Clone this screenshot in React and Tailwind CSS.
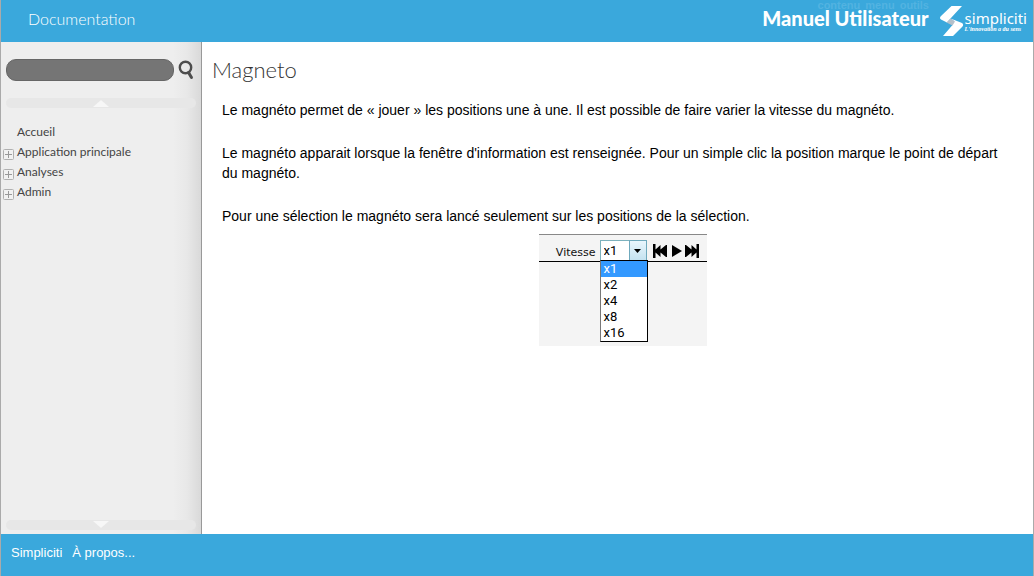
import { useState } from "react";

const speeds = ["x1", "x2", "x4", "x8", "x16"];

const entries = [
  { label: "Accueil", expandable: false },
  { label: "Application principale", expandable: true },
  { label: "Analyses", expandable: true },
  { label: "Admin", expandable: true },
];

function Logo() {
  return (
    <a href="#simpliciti" className="flex items-start pt-[6px] text-white">
      <svg width="24" height="30" viewBox="0 0 24 30" aria-hidden="true">
        <path d="M11.500 0H22L10.500 12.500L7 16.500L1 13.500Q-1 12 1 10Z" fill="#fff" />
        <path d="M10.500 12.500L22 17Q24 18.500 22.500 20.500L13 30H3L12.500 19L14 15Z" fill="#fff" />
        <path d="M10.500 12.500L15 15.500L12.500 19.500L6.500 16.500Z" fill="#b4c0ca" />
      </svg>
      <span className="flex flex-col pl-[1px] pt-[4px]">
        <span className="font-['Noto_Sans',sans-serif] text-[15px] leading-[16px]">simpliciti</span>
        <span className="whitespace-nowrap font-['Liberation_Serif',serif] text-[6px] font-bold italic leading-[6px]">
          L'innovation a du sens
        </span>
      </span>
    </a>
  );
}

function Header() {
  return (
    <header className="relative flex h-[42px] items-start justify-between bg-[#3aa8dc] pl-[27px] pr-[6px] text-white">
      <nav
        aria-label="Raccourcis"
        className="absolute right-[104px] top-0 flex gap-[5px] text-[11px] font-bold leading-[11px] text-[#52b3e1]"
      >
        <a href="#contenu">contenu</a>
        <a href="#menu">menu</a>
        <a href="#outils">outils</a>
      </nav>
      <a href="#documentation" className="pt-[9px] font-['Lato',sans-serif] text-[16px] font-light leading-[20px]">
        Documentation
      </a>
      <div className="relative flex items-start gap-[11px]">
        <span className="pt-[10px] font-['Lato',sans-serif] text-[20px] font-black leading-[16px]">
          Manuel Utilisateur
        </span>
        <Logo />
      </div>
    </header>
  );
}

function ScrollBar({ up }) {
  return (
    <button
      type="button"
      aria-label={up ? "Défiler vers le haut" : "Défiler vers le bas"}
      className="flex h-[10px] items-center justify-center rounded-full bg-[#e7e7e7]"
    >
      <svg width="16" height="8" viewBox="0 0 16 8" fill="#f7f7f7" aria-hidden="true">
        {up ? <path d="M0 8L8 1L16 8Z" /> : <path d="M0 0L8 7L16 0Z" />}
      </svg>
    </button>
  );
}

function Sidebar() {
  return (
    <aside className="flex w-[201px] shrink-0 flex-col border-r border-[#999] bg-[linear-gradient(to_right,#eee_0,#eee_172px,#e8e8e8_186px,#d9d9d9_200px)] pb-[4px] pl-[5px] pr-[5px] pt-[17px]">
      <form className="flex items-start gap-[4px]" onSubmit={(e) => e.preventDefault()}>
        <input
          type="search"
          aria-label="Rechercher"
          className="h-[22px] w-[168px] rounded-[10px] border border-[#666] bg-[#757575] px-2 text-[12px] text-white outline-none"
        />
        <button type="submit" aria-label="Lancer la recherche" className="h-[22px] w-[16px]">
          <svg width="16" height="20" viewBox="0 0 16 20" fill="none" stroke="#4d4d4d" aria-hidden="true">
            <circle cx="7.500" cy="7.500" r="5.700" strokeWidth="2.400" />
            <path d="M10.500 12.500L13.500 17.500" strokeWidth="3" strokeLinecap="round" />
          </svg>
        </button>
      </form>
      <div className="mt-[17px] flex flex-col">
        <ScrollBar up />
      </div>
      <ul className="-ml-[3px] mt-[14px] grow font-['Lato',sans-serif] text-[12px] leading-[20px] text-[#444]">
        {entries.map((entry) => (
          <li key={entry.label} className="flex items-center">
            <span className="flex w-[14px] shrink-0 pt-[4px]">
              {entry.expandable && (
                <button type="button" aria-label={`Développer ${entry.label}`}>
                  <svg width="11" height="11" viewBox="0 0 11 11" fill="none" aria-hidden="true">
                    <rect x=".5" y=".5" width="10" height="10" rx="1" stroke="#b0b0b0" fill="#f2f2f2" />
                    <path d="M2 5.500H9M5.500 2V9" stroke="#999" />
                  </svg>
                </button>
              )}
            </span>
            <a href={`#${entry.label}`}>{entry.label}</a>
          </li>
        ))}
      </ul>
      <ScrollBar />
    </aside>
  );
}

function Player() {
  const [speed, setSpeed] = useState("x1");
  return (
    <div className="h-[112px] w-[168px] border-t border-[#888] bg-[#f4f4f4]">
      <div className="flex h-[27px] items-center justify-end border-b border-black pr-[8px] pt-[5px]">
        <label htmlFor="speed" className="pr-[4px] pt-[5px] font-['DejaVu_Sans',sans-serif] text-[11px] leading-[14px] text-[#111]">
          Vitesse
        </label>
        <div className="relative flex">
          <select
            id="speed"
            value={speed}
            onChange={(e) => setSpeed(e.target.value)}
            className="h-[21px] w-[47px] appearance-none border border-[#7db1bd] bg-white pl-[3px] font-['Roboto',sans-serif] text-[13px] leading-[18px] text-black outline-none"
          >
            {speeds.map((s) => (
              <option key={s}>{s}</option>
            ))}
          </select>
          <span className="pointer-events-none absolute inset-y-0 right-0 flex w-[18px] items-center justify-center border border-[#6fa9bd] bg-[linear-gradient(#e9f6fd,#c4e2f0)]">
            <svg width="7" height="4" viewBox="0 0 7 4" aria-hidden="true">
              <path d="M0 0H7L3.500 4Z" />
            </svg>
          </span>
          <ul
            role="listbox"
            aria-label="Vitesse"
            className="absolute left-0 top-[20px] w-[48px] border border-black border-l-[#777] bg-white font-['Roboto',sans-serif] text-[13px] leading-[16px] text-black"
          >
            {speeds.map((s) => (
              <li
                key={s}
                role="option"
                aria-selected={s === speed}
                onClick={() => setSpeed(s)}
                className={s === speed ? "bg-[#3399ff] pl-[3px] text-white" : "pl-[3px]"}
              >
                {s}
              </li>
            ))}
          </ul>
        </div>
        <div className="flex gap-[5px] pl-[6px]">
          <button type="button" aria-label="Précédent">
            <svg width="14" height="14" viewBox="0 0 14 14" aria-hidden="true">
              <path d="M0 0H2.500V5.500L7.500 1V5.500L13 1H14V13H13L7.500 8.500V13L2.500 8.500V14H0Z" />
            </svg>
          </button>
          <button type="button" aria-label="Lecture">
            <svg width="10" height="14" viewBox="0 0 10 14" aria-hidden="true">
              <path d="M0 1L10 7L0 13Z" />
            </svg>
          </button>
          <button type="button" aria-label="Suivant" className="-ml-[2px]">
            <svg width="14" height="14" viewBox="0 0 14 14" aria-hidden="true">
              <path d="M14 0H11.500V5.500L6.500 1V5.500L1 1H0V13H1L6.500 8.500V13L11.500 8.500V14H14Z" />
            </svg>
          </button>
        </div>
      </div>
    </div>
  );
}

export default function App() {
  return (
    <div className="flex min-h-screen flex-col border-x border-[#aaa] bg-white font-['Liberation_Sans',Arial,sans-serif]">
      <Header />
      <div className="flex grow">
        <Sidebar />
        <main className="grow px-[10px] pt-[16px]">
          <h1 className="font-['Lato',sans-serif] text-[22px] font-light leading-[24px] text-[#333]">Magneto</h1>
          <div className="flex flex-col gap-[23px] px-[10px] pt-[18px] text-[14px] leading-[20px] text-black">
            <p>
              Le magnéto permet de « jouer » les positions une à une. Il est possible de faire varier la vitesse du
              magnéto.
            </p>
            <p>
              Le magnéto apparait lorsque la fenêtre d'information est renseignée. Pour un simple clic la position marque
              le point de départ du magnéto.
            </p>
            <p>Pour une sélection le magnéto sera lancé seulement sur les positions de la sélection.</p>
          </div>
          <div className="mt-[8px] flex justify-center pl-[10px]">
            <Player />
          </div>
        </main>
      </div>
      <footer className="flex h-[42px] gap-[10px] bg-[#3aa8dc] pl-[10px] pt-[11px] text-[13px] leading-[16px] text-white">
        <a href="#simpliciti">Simpliciti</a>
        <a href="#a-propos">À propos...</a>
      </footer>
    </div>
  );
}
